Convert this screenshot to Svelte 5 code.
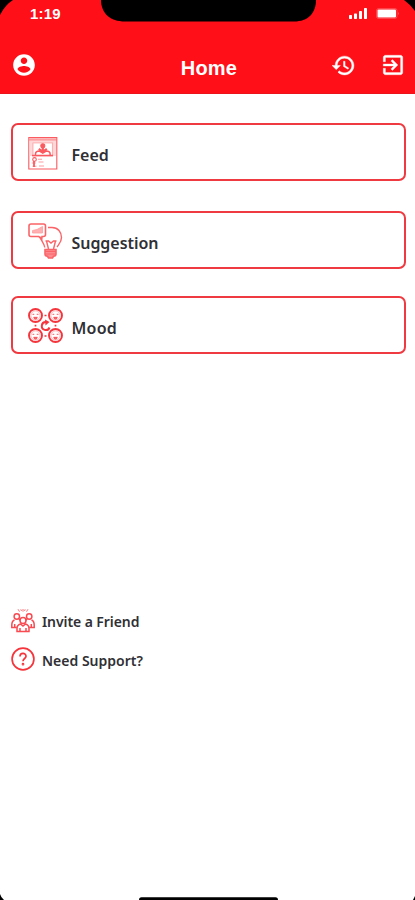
<script>
  const cards = [
    { id: 'feed', label: 'Feed' },
    { id: 'suggestion', label: 'Suggestion' },
    { id: 'mood', label: 'Mood' }
  ];
  const faces = [[7.5, 7.5], [27.5, 7.5], [7.5, 27.5], [27.5, 27.5]];
</script>

<div class="phone">
  <header>
    <div class="status">
      <span class="time">1:19</span>
      <div class="signals">
        <svg width="18" height="11" viewBox="0 0 18 11" fill="#fff"><rect y="7" width="3" height="4" rx=".7"/><rect x="5" y="5.5" width="3" height="5.500" rx=".7"/><rect x="10" y="3" width="3" height="8" rx=".7"/><rect x="15" width="3" height="11" rx=".7"/></svg>
        <svg width="24" height="11" viewBox="0 0 24 11"><rect x=".5" y=".5" width="20.5" height="10" rx="2" fill="none" stroke="#fff" stroke-opacity=".22"/><rect x="1.500" y="1.500" width="18.500" height="8" rx="1" fill="#fff"/><path d="M22 3.800q1.200 1.700 0 3.400z" fill="#fff" opacity=".5"/></svg>
      </div>
    </div>
    <div class="bar">
      <svg width="26" height="26" viewBox="0 0 24 24" fill="#fff"><path d="M12 2C6.480 2 2 6.480 2 12s4.480 10 10 10 10-4.480 10-10S17.520 2 12 2zm0 3c1.660 0 3 1.340 3 3s-1.340 3-3 3-3-1.340-3-3 1.340-3 3-3zm0 14.200c-2.500 0-4.710-1.280-6-3.220.03-1.990 4-3.080 6-3.080 1.990 0 5.970 1.090 6 3.080-1.290 1.940-3.500 3.220-6 3.220z"/></svg>
      <h1>Home</h1>
      <div class="actions">
        <svg width="25" height="25" viewBox="0 0 24 24" fill="#fff" stroke="#fff" stroke-width=".4"><path d="M13 3c-4.970 0-9 4.030-9 9H1l3.890 3.890.07.14L9 12H6c0-3.870 3.130-7 7-7s7 3.130 7 7-3.130 7-7 7c-1.930 0-3.680-.79-4.940-2.060l-1.420 1.420C8.270 19.990 10.510 21 13 21c4.970 0 9-4.030 9-9s-4.030-9-9-9zm-1 5v5l4.280 2.540.72-1.210-3.500-2.080V8H12z"/></svg>
        <svg width="26" height="26" viewBox="0 0 24 24" fill="#fff" stroke="#fff" stroke-width=".3"><path d="M10.090 15.590L11.500 17l5-5-5-5-1.410 1.410L12.670 11H3v2h9.670l-2.580 2.590zM19 3H5c-1.110 0-2 .9-2 2v4h2V5h14v14H5v-4H3v4c0 1.100.89 2 2 2h14c1.100 0 2-.9 2-2V5c0-1.100-.9-2-2-2z"/></svg>
      </div>
    </div>
  </header>

  <main>
    {#each cards as card (card.id)}
      <div class="card {card.id}">
        {#if card.id === 'feed'}
          <svg width="35" height="36" viewBox="0 0 35 36" fill="none" stroke="#fa5a60" stroke-width="1.100">
            <path d="M.8 2.500h28v31.500H.8z" fill="#fff"/>
            <path d="M1.500 3h26.500v18H1.500z" fill="#ffd9da" stroke="none"/>
            <path d="M1 4.500h27.500" stroke-width="2.200" opacity=".45"/>
            <path d="M5 8h19.500v13H5z" fill="#fff" stroke-opacity=".4"/>
            <circle cx="14.800" cy="10.700" r="2" fill="#fa5a60"/>
            <path d="M14.800 12v4.500m-4-2.700 4 3 4-3" stroke-width="2.200"/>
            <path d="M7.500 20v-1q0-3 4-3l3.300 2 3.300-2q4 0 4 3v1M4 20.500h21" stroke-width="1.500"/>
            <circle cx="6.500" cy="24.400" r="1.800"/><path d="M10 24.200h4M3.800 28h4M10.500 27h5M4.500 31.300h4M11 31h5" opacity=".6"/>
            <path d="M6 26v6" stroke-width="1.800"/>
          </svg>
        {:else if card.id === 'suggestion'}
          <svg width="35" height="36" viewBox="0 0 35 36" fill="none" stroke="#fa6468" stroke-width="1.600">
            <path d="M3 1h12.500q2 0 2 2v8.500q0 2-2 2H14l-.3 2.800-3-2.800H3q-2 0-2-2V3q0-2 2-2z" fill="#fff"/>
            <path d="M4.500 10V7.500L9 6.500l5.500-3V10z" fill="#ffb0b2" stroke="#ff9da0" stroke-width=".8"/>
            <path d="M20 4.500h4c6 0 9.500 4.500 9.500 10 0 4.500-2.400 6.500-4.400 9.500M12 13.500c.5 4 4 6 4.800 11" stroke-width="1.400"/>
            <path d="m18.500 18 2 8m7-8-2 8M17.500 18h3l2.500 2 2.500-2h3" stroke-width="1.400"/>
            <path d="M17 26.500h11v4.500q0 2-2.500 2.300L24.500 35h-4l-1-1.700Q17 33 17 31z" fill="#fc8b8f"/><path d="M17 28.500h11M17.500 31h10" stroke-width="1"/>
          </svg>
        {:else}
          <svg width="35" height="36" viewBox="0 0 35 36" fill="none" stroke="#f5343c" stroke-width="1.900">
            {#each faces as [x, y]}
              <circle cx={x} cy={y} r="6.500"/>
              <circle cx={x} cy={y} r="4.600" stroke-width=".8" opacity=".4"/>
              <path d="M{x - 3} {y - 1.2}h1.800m2.400 0h1.800" stroke-width="1" opacity=".8"/>
              <path d="M{x - 2} {y + 1.5}h4q-.4 2.500-2 2.500t-2-2.500z" fill="#fa6468" stroke-width=".3"/>
            {/each}
            <path d="M18 14a4 4 0 1 0 3.500 5.500" stroke-width="2"/><path d="m17 11.500 4.500 2.500-4 3.500z" fill="#f5343c" stroke="none"/>
            <path d="M16.500 7.500h2M16.500 28h2M7.500 16.800v1.800M27.500 16.800v1.800" stroke-width="1.700"/>
          </svg>
        {/if}
        <span>{card.label}</span>
      </div>
    {/each}
  </main>

  <div class="links">
    <div class="link">
      <svg width="24" height="24" viewBox="0 0 24 24" fill="none" stroke="#f84a50" stroke-width="1.500">
        <path d="m7 .2 1.500 2.500M12 0v2.700M17 .2 15.500 2.700M9.800.3l.7 1.700M14.200.3l-.7 1.700" stroke-width="1" opacity=".75"/>
        <circle cx="5.800" cy="7.500" r="2.700"/><circle cx="18.200" cy="7.500" r="2.700"/><circle cx="12" cy="11.500" r="3"/>
        <path d="M3.500 11Q.8 12 .8 16v2.500h5M20.500 11q2.700 1 2.700 5v2.500h-5M8 10l1.500 1.500M16 10l-1.500 1.500M3.700 18.500V15M20.300 18.500V15"/>
        <path d="M6 22.500v-3q0-3.500 3.500-4.500l2.500 2 2.500-2q3.500 1 3.500 4.500v3zM9 22v-3M15 22v-3"/>
      </svg>
      <span class="invite">Invite a Friend</span>
    </div>
    <div class="link support">
      <svg width="24" height="24" viewBox="0 0 24 24" fill="none" stroke="#f5343b" stroke-width="1.700"><circle cx="12" cy="12" r="10.900"/><path d="M9 9.500c0-4 6-4 6-.3 0 2.300-3 2.300-3 5" stroke-width="1.700"/><circle cx="12" cy="17.200" r=".5"/></svg>
      <span>Need Support?</span>
    </div>
  </div>

  <svg class="frame" width="415" height="900" viewBox="0 0 415 900">
    <path d="M0 0h13Q5 5 0 15zM404 0h11v11Q411 5 404 0z"/>
    <path d="M101 0h215c0 13-8 21.500-22 21.500H125C110 21.500 101 13 101 0z"/>
    <path d="M0 894q1 3.500 4 6H0zM415 896v4h-2zM139 900q0-2.800 2.500-2.800h134q2.500 0 2.500 2.800z"/>
  </svg>
</div>

<style>
  :global(body) { margin: 0; background: #fff; }
  .phone { position: relative; width: 415px; height: 900px; overflow: hidden; background: #fff; font-family: "Noto Sans", "Open Sans", sans-serif; color: #303034; }
  svg { display: block; flex: none; }
  header { height: 94px; box-sizing: border-box; background: #ff0f18; border-bottom: 1px solid #e9141c; color: #fff; }
  .status { height: 28px; display: flex; align-items: center; justify-content: space-between; padding: 0 15px 0 30px; box-sizing: border-box; }
  .time { font: bold 15px "Liberation Sans", sans-serif; letter-spacing: .15px; padding-bottom: 1px; }
  .signals { display: flex; gap: 9px; padding-bottom: 1px; }
  .bar { height: 74px; display: grid; grid-template-columns: 1fr auto 1fr; align-items: center; padding: 0 9px 0 11px; box-sizing: border-box; }
  h1 { margin: 6px 0 0 1px; font: bold 20px "Liberation Sans", sans-serif; letter-spacing: .2px; }
  .actions { justify-self: end; display: flex; align-items: center; gap: 24px; }
  main { display: flex; flex-direction: column; padding: 29px 9px 0 11px; }
  .card { height: 58px; box-sizing: border-box; border: 2px solid #f03a41; border-radius: 7px; display: flex; align-items: center; padding-left: 15px; gap: 8.5px; font-size: 16px; font-weight: 600; }
  .suggestion { margin: 30px 0 27px; letter-spacing: -.05px; }
  .card svg { margin-top: 2px; }
  .card span { padding-top: 6px; white-space: nowrap; }
  .mood { letter-spacing: .25px; }
  .links { padding: 255px 0 0 11px; display: flex; flex-direction: column; gap: 14px; }
  .link { height: 24px; display: flex; align-items: center; gap: 7px; font-size: 14px; font-weight: 600; }
  .link span { white-space: nowrap; padding-top: 1px; }
  .invite { letter-spacing: -.08px; }
  .support span { padding-top: 3px; }
  .frame { position: absolute; inset: 0; pointer-events: none; }
</style>
